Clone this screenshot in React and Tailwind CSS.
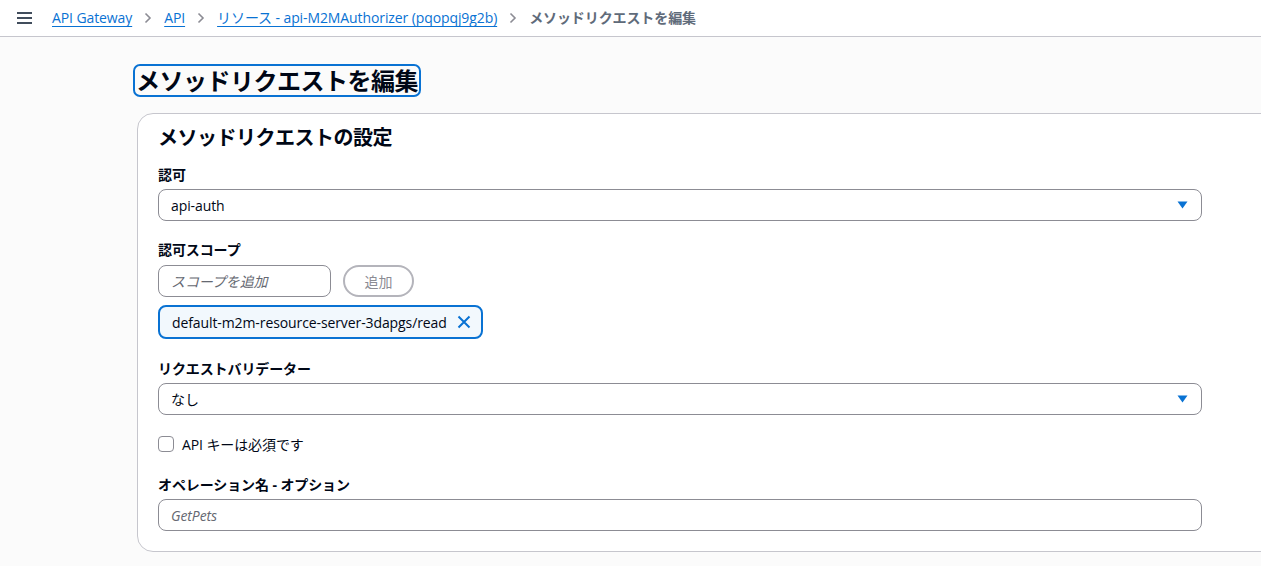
import React from "react";

const font = { fontFamily: '"Open Sans", "Noto Sans CJK JP", sans-serif' };

function Chevron() {
  return (
    <svg width="8" height="12" viewBox="0 0 8 12" className="mx-[12px] shrink-0">
      <path d="M1.5 1.5 L6 6 L1.5 10.5" fill="none" stroke="#8c8c94" strokeWidth="1.6" />
    </svg>
  );
}

function Caret() {
  return (
    <svg width="11" height="8" viewBox="0 0 11 8" className="shrink-0">
      <path d="M0.5 0.5 H10.5 L5.5 7.5 Z" fill="#0972d3" />
    </svg>
  );
}

function Select({ value }) {
  return (
    <div className="flex h-[32px] w-[1044px] items-center justify-between rounded-[8px] border border-[#8c8c94] bg-white pl-[12px] pr-[13px] text-[14px] text-[#000716]">
      <span>{value}</span>
      <Caret />
    </div>
  );
}

function Label({ children, className = "" }) {
  return (
    <div className={`h-[20px] text-[14px] font-bold leading-[20px] text-[#000716] ${className}`}>{children}</div>
  );
}

export default function App() {
  return (
    <div style={font} className="min-h-[566px] w-full overflow-hidden bg-[#fbfbfb] tracking-[-0.1px]">
      {/* top bar */}
      <div className="flex h-[37px] items-center border-b border-[#c6c6cd] bg-white text-[14px]">
        <div className="ml-[17px] flex h-[12px] w-[15px] flex-col justify-between">
          <div className="h-[2px] w-full bg-[#414d5c]" />
          <div className="h-[2px] w-full bg-[#414d5c]" />
          <div className="h-[2px] w-full bg-[#414d5c]" />
        </div>
        <div className="ml-[20px] flex items-center leading-[20px]">
          <a className="text-[#0972d3] underline underline-offset-[3px]">API Gateway</a>
          <Chevron />
          <a className="text-[#0972d3] underline underline-offset-[3px]">API</a>
          <Chevron />
          <a className="text-[#0972d3] underline underline-offset-[3px]">リソース - api-M2MAuthorizer (pqopqj9g2b)</a>
          <Chevron />
          <span className="font-bold text-[#5f6b7a]">メソッドリクエストを編集</span>
        </div>
      </div>

      <div className="pl-[137px]">
        <div className="mt-[29px] inline-block">
          <h1 className="-ml-[2px] rounded-[5px] px-[1px] text-[24px] font-bold leading-[29px] tracking-[-0.5px] text-[#000716] outline-2 outline-[#0972d3]">
            メソッドリクエストを編集
          </h1>
        </div>

        <div className="mt-[17px] w-[1200px] rounded-tl-[16px] rounded-bl-[16px] border border-[#c6c6cd] bg-white pb-[20px] pl-[20px] pt-[12px]">
          <div className="h-[24px] text-[20px] font-bold leading-[24px] tracking-[-0.5px] text-[#000716]">メソッドリクエストの設定</div>

          <Label className="mt-[15px]">認可</Label>
          <div className="mt-[4px]">
            <Select value="api-auth" />
          </div>

          <Label className="mt-[19px]">認可スコープ</Label>
          <div className="mt-[5px] flex items-center gap-[12px]">
            <div className="flex h-[32px] w-[173px] items-center rounded-[8px] border border-[#8c8c94] bg-white px-[12px] text-[14px] italic text-[#656871]">
              スコープを追加
            </div>
            <div className="flex h-[32px] w-[71px] items-center justify-center rounded-full border-2 border-[#b4b4bb] text-[14px] text-[#8c8c94]">
              追加
            </div>
          </div>
          <div className="mt-[8px] inline-flex h-[34px] items-center rounded-[8px] border-2 border-[#0972d3] bg-[#f2f8fd] pl-[12px] pr-[10px] text-[14px] text-[#000716]">
            <span>default-m2m-resource-server-3dapgs/read</span>
            <svg width="14" height="14" viewBox="0 0 14 14" className="ml-[10px]">
              <path d="M1.5 1.5 L12.5 12.5 M12.5 1.5 L1.5 12.5" stroke="#0972d3" strokeWidth="2" fill="none" />
            </svg>
          </div>

          <Label className="mt-[20px]">リクエストバリデーター</Label>
          <div className="mt-[4px]">
            <Select value="なし" />
          </div>

          <div className="mt-[19px] flex h-[20px] items-center">
            <div className="h-[16px] w-[16px] rounded-[4px] border border-[#8c8c94] bg-white" />
            <span className="ml-[8px] text-[14px] text-[#000716]">API キーは必須です</span>
          </div>

          <Label className="mt-[21px]">オペレーション名 - オプション</Label>
          <div className="mt-[4px] flex h-[32px] w-[1044px] items-center rounded-[8px] border border-[#8c8c94] bg-white px-[12px] text-[14px] italic text-[#656871]">
            GetPets
          </div>
        </div>
      </div>
    </div>
  );
}
